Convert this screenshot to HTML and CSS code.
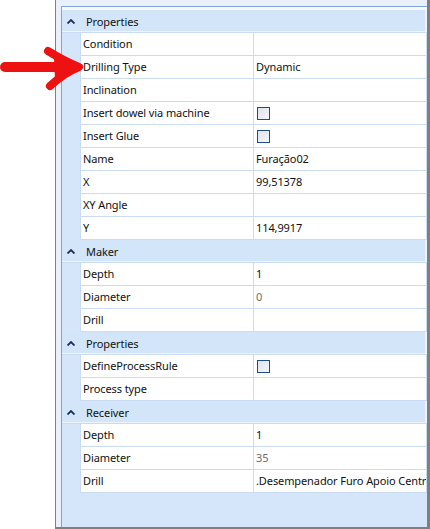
FILE: index.html
```html
<!DOCTYPE html>
<html>
<head>
<meta charset="utf-8">
<link rel="stylesheet" href="styles.css">
</head>
<body>
<div class="page">
  <div class="panel">
    <div class="grid">
      <div class="gap"></div>

      <div class="ghead"><span class="caret"><svg width="8" height="5" viewBox="0 0 8 5"><path d="M0.5 4.5 L4 1 L7.5 4.5" fill="none" stroke="#1b2f5a" stroke-width="1.8"/></svg></span><span class="gtitle">Properties</span></div>
      <div class="row"><div class="gut"></div><div class="lbl">Condition</div><div class="val"></div></div>
      <div class="row"><div class="gut"></div><div class="lbl">Drilling Type</div><div class="val">Dynamic</div></div>
      <div class="row"><div class="gut"></div><div class="lbl">Inclination</div><div class="val"></div></div>
      <div class="row"><div class="gut"></div><div class="lbl">Insert dowel via machine</div><div class="val"><span class="chk"></span></div></div>
      <div class="row"><div class="gut"></div><div class="lbl">Insert Glue</div><div class="val"><span class="chk"></span></div></div>
      <div class="row"><div class="gut"></div><div class="lbl">Name</div><div class="val">Furação02</div></div>
      <div class="row"><div class="gut"></div><div class="lbl">X</div><div class="val">99,51378</div></div>
      <div class="row"><div class="gut"></div><div class="lbl">XY Angle</div><div class="val"></div></div>
      <div class="row"><div class="gut"></div><div class="lbl">Y</div><div class="val">114,9917</div></div>

      <div class="ghead"><span class="caret"><svg width="8" height="5" viewBox="0 0 8 5"><path d="M0.5 4.5 L4 1 L7.5 4.5" fill="none" stroke="#1b2f5a" stroke-width="1.8"/></svg></span><span class="gtitle">Maker</span></div>
      <div class="row"><div class="gut"></div><div class="lbl">Depth</div><div class="val">1</div></div>
      <div class="row"><div class="gut"></div><div class="lbl">Diameter</div><div class="val ro">0</div></div>
      <div class="row"><div class="gut"></div><div class="lbl">Drill</div><div class="val"></div></div>

      <div class="ghead"><span class="caret"><svg width="8" height="5" viewBox="0 0 8 5"><path d="M0.5 4.5 L4 1 L7.5 4.5" fill="none" stroke="#1b2f5a" stroke-width="1.8"/></svg></span><span class="gtitle">Properties</span></div>
      <div class="row"><div class="gut"></div><div class="lbl">DefineProcessRule</div><div class="val"><span class="chk"></span></div></div>
      <div class="row"><div class="gut"></div><div class="lbl">Process type</div><div class="val"></div></div>

      <div class="ghead"><span class="caret"><svg width="8" height="5" viewBox="0 0 8 5"><path d="M0.5 4.5 L4 1 L7.5 4.5" fill="none" stroke="#1b2f5a" stroke-width="1.8"/></svg></span><span class="gtitle">Receiver</span></div>
      <div class="row"><div class="gut"></div><div class="lbl">Depth</div><div class="val">1</div></div>
      <div class="row"><div class="gut"></div><div class="lbl">Diameter</div><div class="val ro">35</div></div>
      <div class="row"><div class="gut"></div><div class="lbl">Drill</div><div class="val">.Desempenador Furo Apoio Centr</div></div>
    </div>
  </div>
  <svg class="arrow" width="86" height="46" viewBox="0 45 86 46">
    <path d="M5 67 L70 67" stroke="#ee1111" stroke-width="10" stroke-linecap="round" fill="none"/>
    <path d="M48 51 Q64 61 79 67 Q64 73 50 86" stroke="#ee1111" stroke-width="8" stroke-linecap="round" stroke-linejoin="round" fill="none"/>
    <path d="M54 57 L80 67 L55 80 Z" fill="#ee1111"/>
  </svg>
</div>
</body>
</html>
```

FILE: styles.css
```css
html, body {
  margin: 0;
  padding: 0;
  background: #ffffff;
}

.page {
  position: relative;
  width: 430px;
  height: 529px;
  overflow: hidden;
  font-family: "Noto Sans", "DejaVu Sans", sans-serif;
  font-size: 11px;
  letter-spacing: -0.1px;
  color: #111;
}

.panel {
  box-sizing: border-box;
  margin-left: 55px;
  width: 375px;
  height: 529px;
  border-left: 1px solid #7f7f7f;
  border-right: 3px solid #7f7f7f;
  border-bottom: 2px solid #7f7f7f;
  padding: 6px 0 0 5px;
  background: #e9f0f9;
}

.grid {
  box-sizing: border-box;
  height: 100%;
  border-top: 1px solid #7fa4dc;
  border-left: 1px solid #7fa4dc;
  background: #d5e6fa;
}

.gap {
  height: 3px;
  background: #f6f9fd;
}

.ghead {
  display: flex;
  align-items: center;
  height: 22px;
  border-bottom: 1px solid #c9dcf4;
  box-shadow: inset -2px -1px 0 #eef4fc;
  background: #d3e5f9;
}

.caret {
  display: flex;
  width: 24px;
  padding-left: 5px;
  box-sizing: border-box;
}

.caret svg {
  display: block;
}

.row {
  display: flex;
  height: 23px;
}

.gut {
  width: 18px;
  flex: none;
}

.lbl, .val {
  box-sizing: border-box;
  flex: none;
  width: 174px;
  height: 23px;
  line-height: 22px;
  background: #fff;
  border-bottom: 1px solid #c9dcf4;
  white-space: nowrap;
  overflow: hidden;
  display: flex;
  align-items: center;
}

.lbl {
  border-left: 1px solid #c9dcf4;
  border-right: 1px solid #c9dcf4;
  padding-left: 2px;
}

.val {
  width: 173px;
  border-right: 1px solid #c9dcf4;
  padding-left: 2px;
}

.ro {
  color: #6d6d6d;
}

.chk {
  display: block;
  box-sizing: border-box;
  width: 13px;
  height: 13px;
  margin-left: 1px;
  border: 1px solid #1e4e85;
  background: linear-gradient(135deg, #dde3ec 0%, #f4f6f9 100%);
}

.arrow {
  position: absolute;
  left: 0;
  top: 45px;
}
```
